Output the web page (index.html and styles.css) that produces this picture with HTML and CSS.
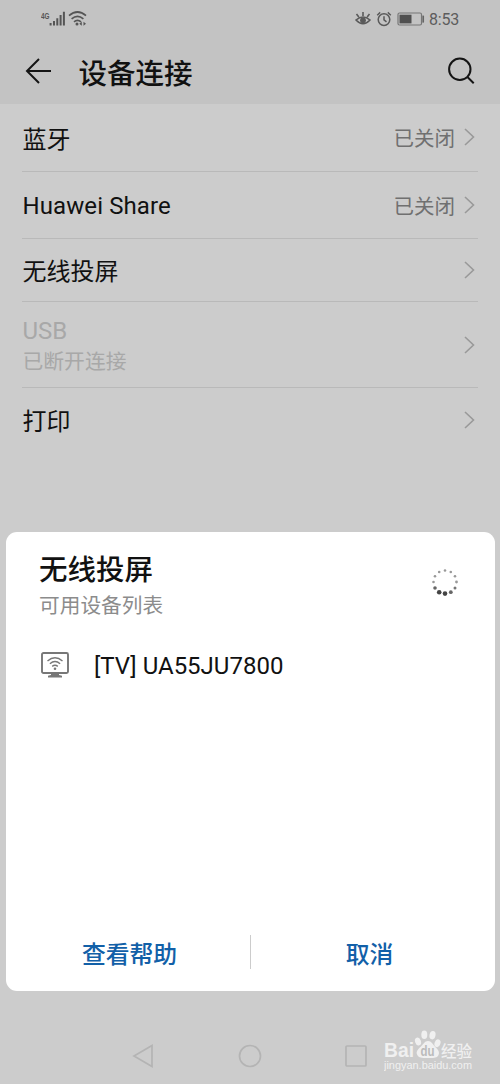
FILE: index.html
```html
<!DOCTYPE html>
<html lang="zh-CN">
<head>
<meta charset="utf-8">
<title>设备连接</title>
<link rel="stylesheet" href="styles.css">
</head>
<body>
<div class="screen">
  <header class="header">
    <div class="status">
      <svg class="signal" width="48" height="20" viewBox="0 0 48 20">
        <text x="0" y="9.500" class="net" textLength="8.500" lengthAdjust="spacingAndGlyphs">4G</text>
        <path d="M9.600 14v2.500M13 12v4.500M16.300 9.200v7.300M19.600 6v10.500M22.900 2.700v13.800" fill="none" stroke="#555" stroke-width="2"/>
        <g fill="none" stroke="#555" stroke-width="1.700">
          <path d="M28 6.600q8.500-7.200 17 0"/>
          <path d="M30.600 9.800q5.900-5 11.800 0"/>
          <path d="M33 12.800q3.500-2.900 7 0"/>
        </g>
        <circle cx="36" cy="15" r="1.500" fill="#555"/>
        <path d="M38.300 14.800l2.500-2v4zM45 14.800l-2.500-2v4z" fill="#555"/>
      </svg>
      <div class="status-right">
        <svg width="16" height="16" viewBox="0 0 16 16" fill="none" stroke="#5a5a5a" stroke-width="1.600">
          <path d="M1 9Q8 3 15 9Q8 16.500 1 9zM8 5V1M3.800 6L1.500 3M12.200 6L14.500 3"/>
          <circle cx="8" cy="9.300" r="2.900" fill="#5a5a5a" stroke="none"/>
        </svg>
        <svg width="16" height="16" viewBox="0 0 16 16" fill="none" stroke="#5a5a5a" stroke-width="1.500">
          <circle cx="8" cy="8.600" r="5.800"/>
          <path d="M8 5.200v3.600l2.500 2M1.200 4.200L4.200 1.400M14.800 4.200L11.800 1.400"/>
        </svg>
        <svg class="battery" width="28" height="14" viewBox="0 0 28 14">
          <rect x="1" y="1" width="23.500" height="12" rx="1.500" fill="none" stroke="#777" stroke-width="1.200"/>
          <rect x="2.500" y="2.700" width="12" height="8.700" fill="#505050"/>
          <path d="M26.200 3.600v7" stroke="#666" stroke-width="1.700"/>
        </svg>
        <span class="clock">8:53</span>
      </div>
    </div>
    <div class="titlebar">
      <svg width="27" height="26" viewBox="0 0 27 26" fill="none" stroke="#151515" stroke-width="2">
        <path d="M26 13H2M14 1L2 13l12 12"/>
      </svg>
      <h1 class="title">设备连接</h1>
      <svg width="28" height="28" viewBox="0 0 28 28" fill="none" stroke="#151515" stroke-width="2">
        <circle cx="12.800" cy="12.300" r="10.700"/>
        <path d="M20.200 19.700l6.500 6.500"/>
      </svg>
    </div>
  </header>

  <main class="list">
    <div class="row first"><span class="name">蓝牙</span><span class="value">已关闭</span><svg class="chev" viewBox="0 0 11 18"><path d="M1 1l8.500 8L1 17"/></svg></div>
    <div class="row"><span class="name latin">Huawei Share</span><span class="value">已关闭</span><svg class="chev" viewBox="0 0 11 18"><path d="M1 1l8.500 8L1 17"/></svg></div>
    <div class="row short"><span class="name">无线投屏</span><svg class="chev" viewBox="0 0 11 18"><path d="M1 1l8.500 8L1 17"/></svg></div>
    <div class="row tall"><div class="name off"><div class="off-name">USB</div><div class="off-sub">已断开连接</div></div><svg class="chev" viewBox="0 0 11 18"><path d="M1 1l8.500 8L1 17"/></svg></div>
    <div class="row last"><span class="name">打印</span><svg class="chev" viewBox="0 0 11 18"><path d="M1 1l8.500 8L1 17"/></svg></div>
  </main>

  <section class="sheet">
    <div class="sheet-head">
      <div>
        <h2 class="sheet-title">无线投屏</h2>
        <p class="sheet-sub">可用设备列表</p>
      </div>
      <svg class="spinner" width="28" height="28" viewBox="0 0 28 28">
        <g fill="#999">
          <circle cx="14" cy="2.500" r="1.300"/><circle cx="19.800" cy="4" r="1.300"/><circle cx="24" cy="8.200" r="1.300"/><circle cx="25.500" cy="14" r="1.400"/><circle cx="8.200" cy="4" r="1.300"/><circle cx="4" cy="8.200" r="1.300"/><circle cx="2.500" cy="14" r="1.300"/>
        </g>
        <circle cx="24" cy="20" r="1.500" fill="#777"/>
        <circle cx="19.800" cy="24.200" r="1.900" fill="#666"/>
        <circle cx="14" cy="25.600" r="2.300" fill="#444"/>
        <circle cx="8.200" cy="24.200" r="2.300" fill="#444"/>
        <circle cx="4" cy="20" r="1.800" fill="#666"/>
      </svg>
    </div>
    <div class="device">
      <svg width="28" height="27" viewBox="0 0 28 27" fill="none" stroke="#777">
        <rect x="1" y="1" width="26" height="20" rx="1.500" stroke-width="1.900"/>
        <path d="M6.500 9q7.500-6.500 15 0M8.900 11.800q5.100-4.400 10.200 0M11.200 14.400q2.800-2.200 5.600 0" stroke-width="1.400"/>
        <circle cx="14" cy="16.800" r="1.300" fill="#777" stroke="none"/>
        <path d="M10 21.500h8v1.500l3 .8v1.700H7v-1.700l3-.8z" fill="#777" stroke="none"/>
      </svg>
      <span class="device-name">[TV] UA55JU7800</span>
    </div>
    <div class="actions">
      <span class="action help">查看帮助</span>
      <span class="divider"></span>
      <span class="action cancel">取消</span>
    </div>
  </section>

  <footer class="nav">
    <svg width="22" height="24" viewBox="0 0 22 24"><path d="M20 1.500v21L2 12z"/></svg>
    <svg width="24" height="24" viewBox="0 0 24 24"><circle cx="12" cy="12" r="10.500"/></svg>
    <svg width="22" height="22" viewBox="0 0 22 22"><rect x="1" y="1" width="20" height="20" rx="1"/></svg>
    <svg class="mark" width="92" height="46" viewBox="0 0 92 46">
      <g fill="#f0f0f0">
        <text x="0" y="29" class="mark-bai" textLength="30" lengthAdjust="spacingAndGlyphs">Bai</text>
        <ellipse cx="34" cy="13.500" rx="2.900" ry="4.100" transform="rotate(-20 34 13.500)"/>
        <ellipse cx="40.300" cy="6.800" rx="3" ry="4.300"/>
        <ellipse cx="48.500" cy="7.200" rx="3" ry="4.200" transform="rotate(12 48.500 7.200)"/>
        <ellipse cx="53.500" cy="15.300" rx="2.900" ry="4" transform="rotate(20 53.500 15.300)"/>
        <path d="M44 13c3.500 0 4.800 3.500 7.300 6s4.700 4.700 3.200 8-5.500 3-10.500 3-9 .2-10.700-3 .5-5.700 3.200-8 4-6 7.500-6z"/>
        <text x="57" y="28.500" class="mark-cn">经验</text>
        <text x="0" y="41" class="mark-url" textLength="88" lengthAdjust="spacingAndGlyphs">jingyan.baidu.com</text>
      </g>
      <text x="36.500" y="28" class="mark-du" textLength="14" lengthAdjust="spacingAndGlyphs">du</text>
    </svg>
  </footer>
</div>
</body>
</html>
```
FILE: styles.css
```css
* { box-sizing: border-box; }
body { margin: 0; font-family: Roboto, "Noto Sans CJK SC", sans-serif; color: #111; }
h1, h2, p { margin: 0; font-weight: 500; }
svg { display: block; flex: none; }

.screen { width: 500px; height: 1084px; background: #ccc; display: flex; flex-direction: column; overflow: hidden; }

.header { height: 104px; background: #c3c3c3; flex: none; }
.status { height: 38px; padding: 0 41px; display: flex; align-items: center; justify-content: space-between; }
.net { font: bold 9px "Liberation Sans", sans-serif; fill: #555; }
.status-right { display: flex; align-items: center; gap: 5px; }
.battery { margin: 0 1px 0 0; }
.clock { font-size: 16px; line-height: 20px; color: #5c5c5c; letter-spacing: -.2px; margin-left: -2px; padding-top: 2px; }
.titlebar { height: 66px; padding: 0 25px 0 24.5px; display: flex; align-items: center; }
.title { flex: 1; margin-left: 27px; font-size: 28.5px; line-height: 40px; padding-top: 8px; }

.list { flex: none; padding: 0 22px; }
.row { height: 67px; display: flex; align-items: center; border-bottom: 1px solid #b9b9b9; padding-right: 3px; }
.row.first { height: 67.5px; }
.row.short { height: 63.5px; }
.row.tall { height: 86px; }
.row.last { height: 66px; border-bottom: 0; }
.name { flex: 1; font-size: 24px; line-height: 34px; padding: 5px 0 0 .5px; }
.name.latin { letter-spacing: .1px; padding-top: 2px; }
.row.last .name { padding-top: 2px; }
.value { font-size: 20.5px; line-height: 30px; padding-top: 4px; color: #707070; margin-right: 9px; }
.chev { width: 11px; height: 18px; fill: none; stroke: #999; stroke-width: 1.6; }
.row.last .chev { margin-bottom: 2px; }
.off { color: #a8a8a8; }
.off-name { line-height: 31px; }
.off-sub { font-size: 20.8px; line-height: 31px; }

.sheet { flex: none; margin: 78px 5.5px 0; height: 459px; background: #fff; border-radius: 11px; display: flex; flex-direction: column; }
.sheet-head { display: flex; justify-content: space-between; padding: 19px 36px 0 33.5px; }
.sheet-title { font-size: 28.5px; line-height: 40px; }
.sheet-sub { font-size: 20.7px; line-height: 30px; color: #8c8c8c; font-weight: 400; }
.spinner { margin-top: 17px; }
.device { display: flex; align-items: center; height: 40px; margin: 25px 0 0 35.5px; gap: 25px; font-size: 24px; }
.device svg { margin-bottom: 1px; }
.actions { margin-top: auto; height: 57px; display: grid; grid-template-columns: 244px 1px 244px; align-items: start; }
.action { text-align: center; font-size: 23.8px; line-height: 36px; padding-top: 3px; font-weight: 500; color: #1260a8; }
.help { padding-left: 4px; }
.cancel { padding-right: 6px; }
.divider { height: 34px; margin-top: 1px; background: #ccc; }

.nav { flex: 1; display: flex; align-items: center; padding: 37px 0 0 132px; fill: none; stroke: #b4b4b4; stroke-width: 1.7; }
.nav svg + svg { margin-left: 83.5px; }
.nav svg + svg.mark { margin: -10px 0 0 17px; stroke: none; }
.mark-bai { font: bold 21px "Liberation Sans", sans-serif; }
.mark-du { font: bold 14px "Liberation Sans", sans-serif; fill: #bbb; }
.mark-cn { font: 500 15.5px "Noto Sans CJK SC", sans-serif; }
.mark-url { font: 11px "Liberation Sans", sans-serif; }
```
